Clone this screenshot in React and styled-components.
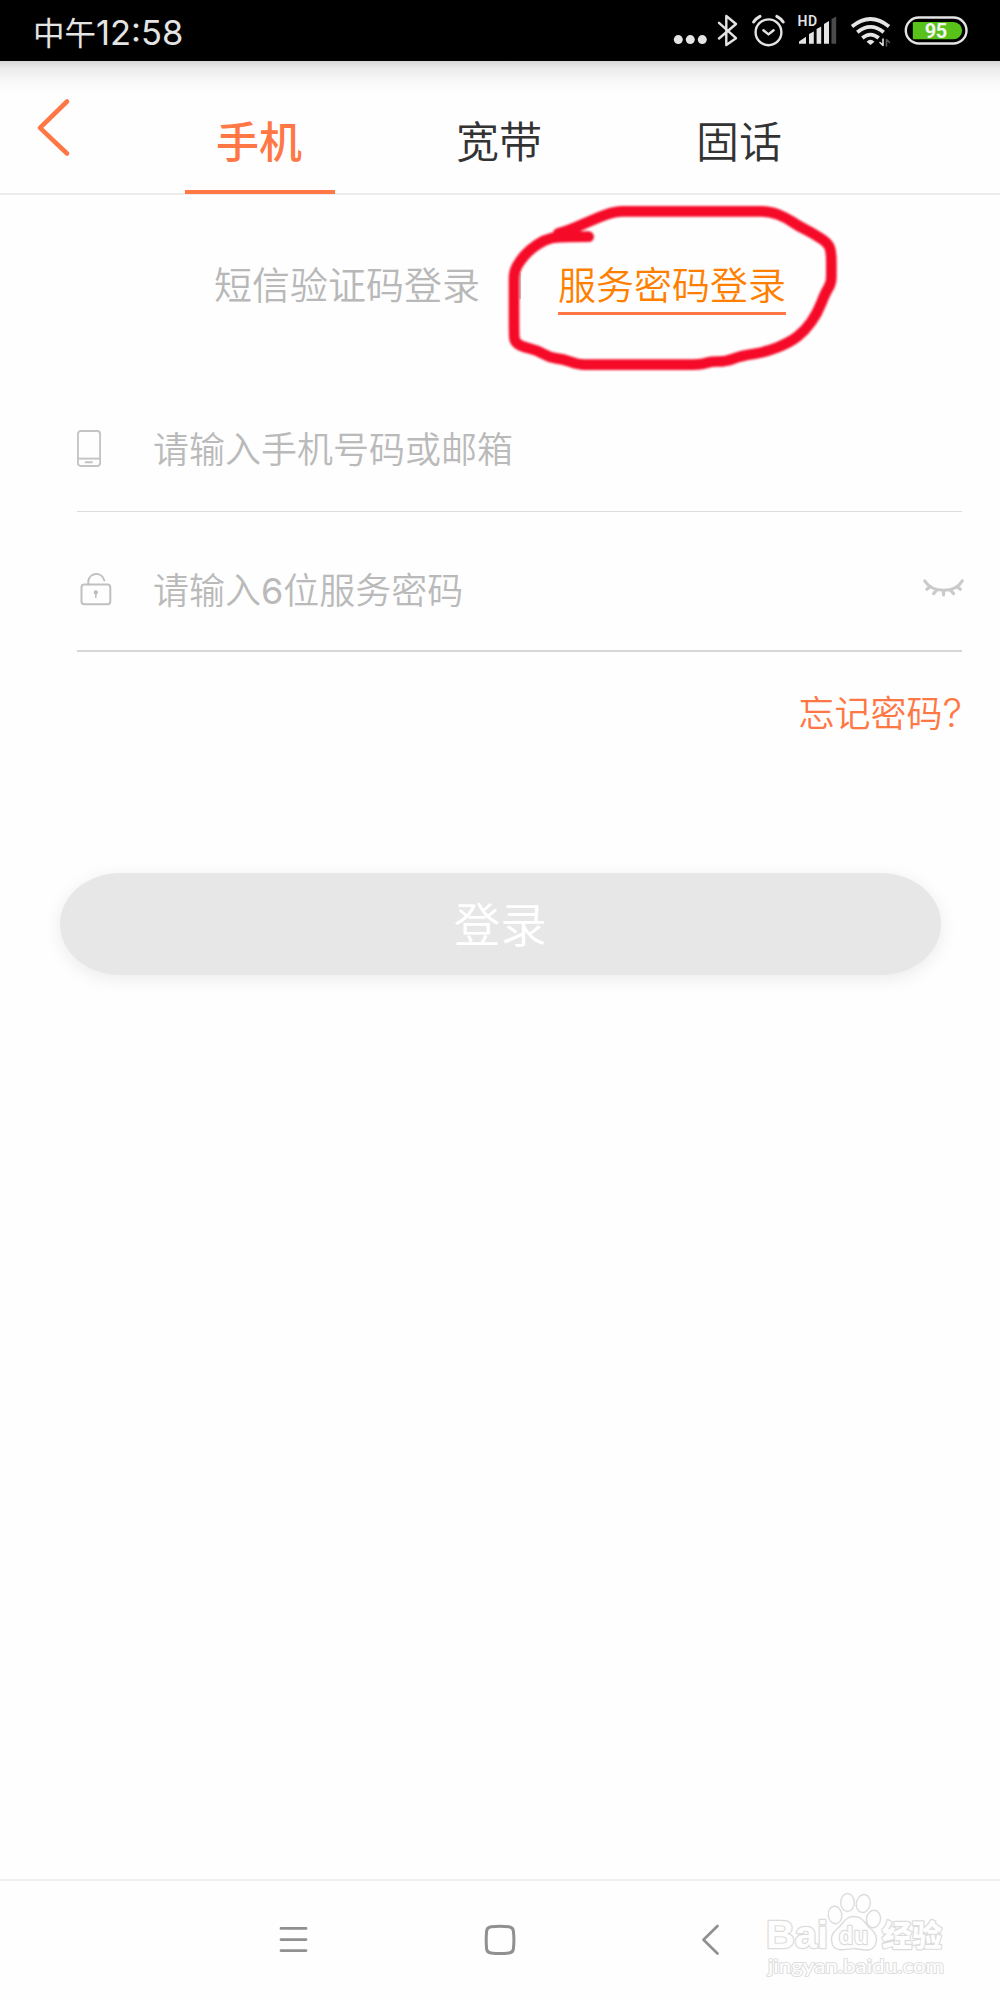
import * as React from "react";
import styled, { createGlobalStyle } from "styled-components";

const GlobalStyle = createGlobalStyle`
  * {
    box-sizing: border-box;
  }
  body {
    margin: 0;
    background-color: #fefefe;
    font-family: "Noto Sans CJK SC", sans-serif;
  }
`;

const Screen = styled.div`
  position: relative;
  display: flex;
  flex-direction: column;
  width: 1000px;
  height: 2000px;
  overflow: hidden;
  background-color: #fefefe;
`;

const StatusBar = styled.div`
  display: flex;
  justify-content: space-between;
  height: 61px;
  padding: 0 28px 0 33px;
  background-color: #000;
`;

const Clock = styled.div`
  display: flex;
  align-items: center;
  height: 61px;
  padding-top: 2px;
  color: #e4e4e4;
  font-size: 31.5px;
  line-height: 61px;
`;

const Digits = styled.span`
  font-family: Inter, sans-serif;
  font-size: 34.5px;
  font-weight: 400;
  padding-top: 1px;
`;

const StatusIcons = styled.div`
  display: flex;
  color: #e4e4e4;
`;

const Header = styled.header`
  display: flex;
  height: 134px;
  border-bottom: 2px solid #ececec;
  background: linear-gradient(#d6d6d6, #ececec 8px, #f8f8f8 20px, #fefefe 32px);
`;

const Back = styled.a`
  width: 140px;
  padding: 36px 0 0 35px;
`;

const Tabs = styled.nav`
  display: flex;
`;

const Tab = styled.a`
  display: flex;
  justify-content: center;
  width: 240px;
  height: 134px;
  color: ${({ $active }) => ($active ? "#ff7744" : "#333")};
  font-size: 43px;
  font-weight: ${({ $active }) => ($active ? 500 : 350)};
  line-height: 60px;
`;

const TabLabel = styled.span`
  width: 150px;
  height: 133px;
  padding: 48px 2px 0 0;
  text-align: center;
  border-bottom: 4px solid ${({ $active }) => ($active ? "#ff7744" : "transparent")};
`;

const LoginTypes = styled.div`
  display: flex;
  align-items: flex-start;
  height: 120px;
  padding: 61px 0 0 214px;
`;

const LoginType = styled.a`
  height: 59px;
  color: ${({ $active }) => ($active ? "#ff8000" : "#b8b8b8")};
  font-size: 38px;
  font-weight: 350;
  line-height: 53px;
  border-bottom: 3px solid ${({ $active }) => ($active ? "#ff7744" : "transparent")};
`;

const Separator = styled.span`
  width: 2px;
  height: 26px;
  margin: 17px 37px 0 39px;
  background-color: #ccc;
`;

const Form = styled.form`
  display: flex;
  flex-direction: column;
  padding: 0 38px 0 77px;
`;

const Field = styled.label`
  display: flex;
  align-items: center;
  height: ${({ $height }) => $height}px;
  padding-top: ${({ $top }) => $top}px;
  border-bottom: ${({ $line }) => $line};
`;

const FieldIcon = styled.span`
  display: flex;
  width: 76px;
`;

const Placeholder = styled.span`
  flex: 1;
  color: #bababa;
  font-size: 36px;
  font-weight: 350;
  line-height: 50px;
  margin-top: -4px;
`;

const Latin = styled.span`
  font-family: Inter, sans-serif;
  font-size: ${({ $size }) => $size || 36}px;
  font-weight: ${({ $weight }) => $weight || 300};
  line-height: 1;
`;

const EyeIcon = styled.span`
  display: flex;
  margin: -4px -3px 0 0;
`;

const Forgot = styled.a`
  align-self: flex-end;
  height: 50px;
  margin-top: 34px;
  color: #ff7744;
  font-size: 36px;
  font-weight: 350;
  line-height: 50px;
`;

const Submit = styled.div`
  width: 881.5px;
  height: 102px;
  margin: 137px 0 0 59.5px;
  border-radius: 60px / 51px;
  background-color: #e7e7e7;
  box-shadow: 0 4px 18px rgba(0, 0, 0, 0.08);
  color: #fff;
  font-size: 46.5px;
  font-weight: 350;
  line-height: 98px;
  text-align: center;
`;

const NavBar = styled.footer`
  display: flex;
  height: 121px;
  margin-top: auto;
  padding: 42px 0 0 278px;
  border-top: 2px solid #eee;
`;

const NavItem = styled.a`
  width: ${({ $width }) => $width}px;
`;

const Circled = styled.svg`
  position: absolute;
  left: 490px;
  top: 190px;
`;

const CircledStroke = styled.path`
  filter: blur(3px);
`;

const Watermark = styled.svg`
  position: absolute;
  left: 740px;
  top: 1870px;
`;

const circlePoints = [
  [296, 140], [205, 140], [165, 149], [122, 176], [90, 212], [72, 245], [72, 290], [72, 430],
  [74, 455], [95, 470], [140, 480], [180, 503], [218, 507], [265, 524], [300, 524], [610, 524],
  [640, 522], [665, 514], [705, 515], [755, 497], [825, 487], [900, 457], [945, 422], [982, 370],
  [1006, 308], [1024, 280], [1024, 240], [1024, 190], [1016, 160], [965, 128], [925, 108],
  [890, 84], [840, 64], [790, 64], [420, 64], [375, 64], [320, 84], [245, 118], [205, 130],
];

// joins the midpoints with curves, so the corners come out round
function smoothPath(points) {
  const [first, ...rest] = points;
  const last = rest[rest.length - 1];
  const curves = rest.slice(0, -1).map(([x, y], i) => {
    const [nx, ny] = rest[i + 1];
    return `Q${x} ${y} ${(x + nx) / 2} ${(y + ny) / 2}`;
  });
  return `M${first.join(" ")} ${curves.join(" ")} L${last.join(" ")}`;
}

function StatusIcon({ x, width, children }) {
  return (
    <svg
      width={width}
      height="61"
      viewBox={`${x} 0 ${width} 61`}
      fill="none"
      stroke="currentColor"
      strokeWidth="2.4"
      strokeLinecap="round"
      strokeLinejoin="round"
    >
      {children}
    </svg>
  );
}

function Status() {
  return (
    <StatusBar>
      <Clock>
        中午<Digits>12:58</Digits>
      </Clock>
      <StatusIcons>
        <StatusIcon x={672} width={38}>
          <g fill="currentColor" stroke="none">
            <circle cx="678.3" cy="39.6" r="4.5" />
            <circle cx="690.3" cy="39.6" r="4.5" />
            <circle cx="702.3" cy="39.6" r="4.5" />
          </g>
        </StatusIcon>
        <StatusIcon x={710} width={36}>
          <path d="M719 22.8 L736 38.2 L726.3 45 V16 L736 24 L719 38.5" />
        </StatusIcon>
        <StatusIcon x={746} width={46}>
          <circle cx="768.5" cy="32.3" r="12.9" />
          <path d="M763.4 30.2 L768.5 34.4 L773.6 30.2" />
          <path d="M753.6 22 Q756 18.3 760 16.3" strokeWidth="3" />
          <path d="M783.2 22 Q780.8 18.3 776.8 16.3" strokeWidth="3" />
        </StatusIcon>
        <StatusIcon x={792} width={52}>
          <text
            x="797.4"
            y="25.8"
            fill="currentColor"
            stroke="none"
            fontFamily="Roboto, sans-serif"
            fontSize="14"
            fontWeight="600"
            letterSpacing="0.8"
          >
            HD
          </text>
          <g fill="currentColor" stroke="none">
            <path d="M799 43.7 V41.5 L806 36.8 V43.7 Z" />
            <path d="M809 43.7 V34 L813.8 31.5 V43.7 Z" />
            <path d="M816.6 43.7 V29 L821.2 26.5 V43.7 Z" />
            <path d="M824 43.7 V24 L829 21 V43.7 Z" />
            <path d="M831.5 43.7 V19 L836.2 16.5 V43.7 Z" fill="#4a4a4a" />
          </g>
        </StatusIcon>
        <StatusIcon x={844} width={56}>
          <g strokeWidth="3.8" strokeLinecap="butt">
            <path d="M852 26.5 Q870.5 11.5 889 26.5" />
            <path d="M857.3 32.2 Q870.5 21.5 883.7 32.2" />
            <path d="M862.3 38 Q870.5 31.3 878.7 38" />
          </g>
          <path d="M866.5 41.8 Q870.5 37.8 874.5 41.8 L870.5 45 Z" fill="currentColor" stroke="none" />
          <path d="M880 42.5 L883 45.5 V39" strokeWidth="1.6" />
          <path d="M886.5 46 V39.5 L889.5 42.5" strokeWidth="1.6" stroke="#555" />
        </StatusIcon>
        <StatusIcon x={900} width={72}>
          <rect x="905.8" y="17.5" width="60.7" height="26" rx="13" />
          <path
            d="M914 22 H953.5 A8.6 8.6 0 0 1 953.5 39.2 H914 Q912.8 39.2 912.8 38 V23.2 Q912.8 22 914 22 Z"
            fill="#59c21a"
            stroke="none"
          />
          <text
            x="935.7"
            y="38"
            textAnchor="middle"
            fill="#f4f4f4"
            stroke="none"
            fontFamily="Roboto, sans-serif"
            fontSize="20"
            fontWeight="700"
            letterSpacing="-0.6"
          >
            95
          </text>
        </StatusIcon>
      </StatusIcons>
    </StatusBar>
  );
}

function PhoneIcon() {
  return (
    <svg width="24" height="38" viewBox="0 0 24 38" fill="none" stroke="#c4c4c4" strokeWidth="1.9">
      <rect x="0.9" y="1" width="22.2" height="35" rx="3" />
      <path d="M1 28.6 H23" />
      <path d="M8.5 32.2 H15" strokeLinecap="round" />
    </svg>
  );
}

function LockIcon() {
  return (
    <svg width="36" height="36" viewBox="0 0 36 36" fill="none" stroke="#c0c0c0" strokeWidth="2">
      <rect x="4.5" y="12.6" width="28.8" height="19.6" rx="2.8" />
      <path d="M11.3 12.5 V9 A8.2 8.6 0 0 1 27.3 8.6" strokeLinecap="round" />
      <circle cx="18.8" cy="20.4" r="2.1" fill="#bababa" stroke="none" />
      <path d="M18.8 20.5 V26" strokeWidth="1.6" />
    </svg>
  );
}

function ClosedEyeIcon() {
  return (
    <svg
      width="42"
      height="18"
      viewBox="0 0 42 18"
      fill="none"
      stroke="#cacaca"
      strokeWidth="3.2"
      strokeLinecap="round"
    >
      <path d="M1.8 2 C9.5 14.3 32 14.3 39.2 2" />
      <path d="M7 7.8 L3.9 10.2 M13.3 11.5 L10.6 14.6 M20.5 11.8 V15.8 M27.8 11.5 L30.6 14.6 M34.2 7.8 L37.3 10.2" />
    </svg>
  );
}

function RedCircle() {
  return (
    <Circled width="360" height="190" viewBox="0 0 1080 570">
      <CircledStroke
        d={smoothPath(circlePoints)}
        fill="none"
        stroke="#f50a28"
        strokeWidth="32"
        strokeLinecap="round"
        strokeLinejoin="round"
      />
    </Circled>
  );
}

function BaiduMark() {
  return (
    <Watermark width="260" height="130" viewBox="0 0 260 130">
      <g fill="#fefefe" stroke="#dcdcdc" strokeWidth="1.4">
        <ellipse cx="107.5" cy="32.5" rx="6.8" ry="9" />
        <ellipse cx="123.3" cy="33.5" rx="7" ry="9" transform="rotate(12 123.3 33.5)" />
        <ellipse cx="95" cy="45" rx="6.8" ry="8.8" transform="rotate(-8 95 45)" />
        <ellipse cx="133.5" cy="49" rx="7" ry="8.8" transform="rotate(8 133.5 49)" />
        <path d="M114 46.5 C105 46.5 103 54 97.5 58.5 C91 63.5 90.5 70 92.5 75 C95.5 81.5 104 80 114 78.5 C124 80 132 82.5 135.5 74.5 C138 68 135.5 62.5 130.5 58.5 C125 54 123 46.5 114 46.5 Z" />
      </g>
      <g
        fill="#fefefe"
        stroke="#dcdcdc"
        strokeWidth="2.4"
        paintOrder="stroke"
        strokeLinejoin="round"
        fontFamily="'Liberation Sans', sans-serif"
      >
        <text x="26" y="77.5" fontSize="38" fontWeight="700" textLength="62" lengthAdjust="spacingAndGlyphs">
          Bai
        </text>
        <text x="99" y="74" fontSize="23" fontWeight="700" textLength="29">
          du
        </text>
        <text x="142" y="76" fontSize="30" fontWeight="900" fontFamily="'Noto Sans CJK SC', sans-serif">
          经验
        </text>
        <text
          x="28"
          y="102.5"
          fontSize="20"
          strokeWidth="2"
          stroke="#dfdfdf"
          textLength="176"
          lengthAdjust="spacingAndGlyphs"
          fontFamily="Lato, sans-serif"
        >
          jingyan.baidu.com
        </text>
      </g>
    </Watermark>
  );
}

function App() {
  return (
    <Screen>
      <GlobalStyle />
      <Status />
      <Header>
        <Back>
          <svg width="36" height="62" viewBox="0 0 36 62" fill="none" stroke="#ff7744" strokeWidth="4.6">
            <path d="M32 4.5 L5 30.8 L32 56.5" strokeLinecap="round" strokeLinejoin="round" />
          </svg>
        </Back>
        <Tabs>
          <Tab $active>
            <TabLabel $active>手机</TabLabel>
          </Tab>
          <Tab>
            <TabLabel>宽带</TabLabel>
          </Tab>
          <Tab>
            <TabLabel>固话</TabLabel>
          </Tab>
        </Tabs>
      </Header>
      <LoginTypes>
        <LoginType>短信验证码登录</LoginType>
        <Separator />
        <LoginType $active>服务密码登录</LoginType>
      </LoginTypes>
      <Form>
        <Field $height={197} $top={71} $line="1px solid #dcdcdc">
          <FieldIcon>
            <PhoneIcon />
          </FieldIcon>
          <Placeholder>请输入手机号码或邮箱</Placeholder>
        </Field>
        <Field $height={140} $top={17} $line="2px solid #d6d6d6">
          <FieldIcon>
            <LockIcon />
          </FieldIcon>
          <Placeholder>
            请输入<Latin $weight={400}>6</Latin>位服务密码
          </Placeholder>
          <EyeIcon>
            <ClosedEyeIcon />
          </EyeIcon>
        </Field>
        <Forgot>
          忘记密码<Latin $size={39}>?</Latin>
        </Forgot>
      </Form>
      <Submit>登录</Submit>
      <NavBar>
        <NavItem $width={205}>
          <svg width="32" height="32" viewBox="0 0 32 32" stroke="#909090" strokeWidth="2.8" strokeLinecap="round">
            <path d="M3 5.4 H28 M3 16.6 H28 M3 27.6 H28" />
          </svg>
        </NavItem>
        <NavItem $width={217}>
          <svg width="34" height="34" viewBox="0 0 34 34" fill="none" stroke="#909090" strokeWidth="3">
            <path d="M8 3.8 Q17 2.6 26 3.8 Q30 4.4 30.4 8 Q31.4 17 30.4 26 Q30 29.6 26 30 Q17 31.2 8 30 Q4 29.6 3.6 26 Q2.8 17 3.6 8 Q4 4.4 8 3.8 Z" />
          </svg>
        </NavItem>
        <NavItem $width={40}>
          <svg width="22" height="34" viewBox="0 0 22 34" fill="none" stroke="#909090" strokeWidth="2.7">
            <path d="M17.5 3 L3.5 16.8 L17.5 30.5" strokeLinecap="round" strokeLinejoin="round" />
          </svg>
        </NavItem>
      </NavBar>
      <RedCircle />
      <BaiduMark />
    </Screen>
  );
}

export default App;
